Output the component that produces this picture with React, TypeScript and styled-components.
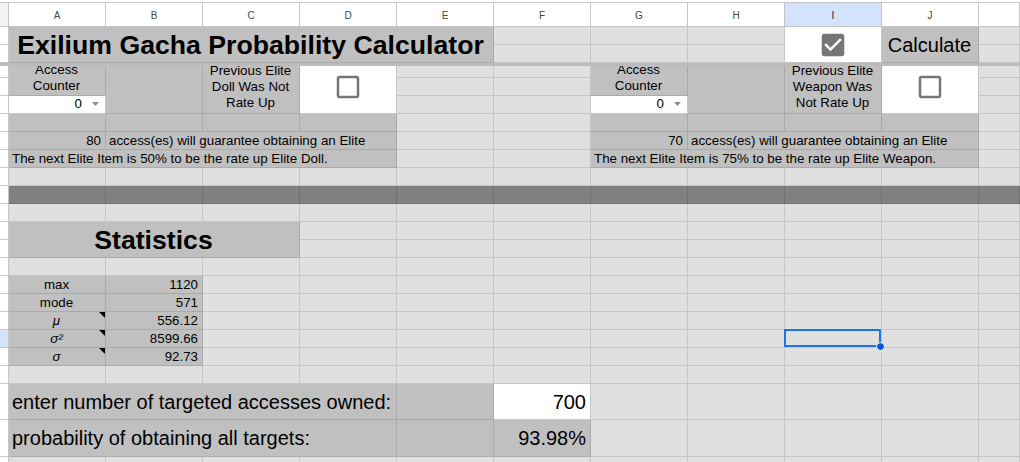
import React from "react";
import styled, { createGlobalStyle } from "styled-components";

const GlobalStyle = createGlobalStyle`
  html, body {
    margin: 0;
    padding: 0;
    background: #ffffff;
  }
  body {
    font-family: "Liberation Sans", Arial, sans-serif;
    overflow: hidden;
  }
`;

type Fill = "light" | "gray" | "white" | "dark";
type HAlign = "left" | "center" | "right";
type VAlign = "top" | "center" | "bottom";

const fills: Record<Fill, { bg: string; line: string }> = {
  light: { bg: "#e0e0e0", line: "#c6c6c6" },
  gray: { bg: "#c0c0c0", line: "#aaaaaa" },
  white: { bg: "#ffffff", line: "#c6c6c6" },
  dark: { bg: "#808080", line: "#707070" },
};

const justify: Record<HAlign, string> = { left: "flex-start", center: "center", right: "flex-end" };
const alignItems: Record<VAlign, string> = { top: "flex-start", center: "center", bottom: "flex-end" };

// row header stub + A..J at 97px + K taking what is left
const COLUMNS = "9px repeat(10, 97px) 1fr";
const GRID_LINE = "#c4c7c5";

const Sheet = styled.div`
  width: 1020px;
  height: 462px;
  box-sizing: border-box;
  padding-top: 2px;
  overflow: hidden;
  display: flex;
  flex-direction: column;
  background: #ffffff;
`;

const ColumnHeader = styled.div`
  flex: none;
  display: grid;
  grid-template-columns: ${COLUMNS};
  grid-template-rows: 24px;
  border-top: 1px solid ${GRID_LINE};
`;

const HeaderCell = styled.div<{ $active?: boolean; $corner?: boolean }>`
  box-sizing: border-box;
  display: flex;
  align-items: center;
  justify-content: center;
  border-right: 1px solid ${GRID_LINE};
  border-bottom: 1px solid ${GRID_LINE};
  background: ${(p) => (p.$corner ? "#f1f3f4" : p.$active ? "#d3e3fd" : "#ffffff")};
  color: ${(p) => (p.$active ? "#0b1a33" : "#444746")};
  font-size: 10px;
  padding-top: 1px;
`;

const Frozen = styled.div`
  flex: none;
  display: grid;
  grid-template-columns: ${COLUMNS};
  grid-template-rows: 18px 18px;
`;

const FreezeBar = styled.div`
  flex: none;
  height: 3px;
  background: #bcbcbc;
`;

const Viewport = styled.div`
  flex: 1;
  overflow: hidden;
`;

const Body = styled.div`
  display: grid;
  grid-template-columns: ${COLUMNS};
  grid-template-rows: repeat(18, 18px) 36px 37px 18px;
  /* sheet is scrolled a few pixels past row 3 */
  margin-top: -6px;
`;

const RowHead = styled.div<{ $active?: boolean }>`
  box-sizing: border-box;
  border-right: 1px solid ${GRID_LINE};
  border-bottom: 1px solid ${GRID_LINE};
  background: ${(p) => (p.$active ? "#d3e3fd" : "#ffffff")};
`;

interface CellProps {
  $fill: Fill;
  $cs?: number;
  $rs?: number;
  $align?: HAlign;
  $valign?: VAlign;
  $size?: number;
  $bold?: boolean;
  $italic?: boolean;
  $wrap?: boolean;
}

const Cell = styled.div<CellProps>`
  box-sizing: border-box;
  position: relative;
  grid-column: span ${(p) => p.$cs ?? 1};
  grid-row: span ${(p) => p.$rs ?? 1};
  display: flex;
  justify-content: ${(p) => justify[p.$align ?? "left"]};
  align-items: ${(p) => alignItems[p.$valign ?? "bottom"]};
  text-align: ${(p) => p.$align ?? "left"};
  padding: 0 4px 0 3px;
  overflow: hidden;
  background: ${(p) => fills[p.$fill].bg};
  border-right: 1px solid ${(p) => fills[p.$fill].line};
  border-bottom: 1px solid ${(p) => fills[p.$fill].line};
  color: #000000;
  font-size: ${(p) => p.$size ?? 13.33}px;
  line-height: ${(p) => Math.round((p.$size ?? 13.33) * 1.17 + 0.4)}px;
  font-weight: ${(p) => (p.$bold ? 700 : 400)};
  font-style: ${(p) => (p.$italic ? "italic" : "normal")};
  white-space: ${(p) => (p.$wrap ? "normal" : "nowrap")};
`;

const Dropdown = styled(Cell)`
  justify-content: flex-end;
  align-items: center;
  gap: 10px;
  padding: 0 6px 2px 3px;
`;

const SelectedCell = styled(Cell)`
  overflow: visible;
  z-index: 2;
`;

const Selection = styled.div`
  position: absolute;
  top: -1px;
  left: -1px;
  right: 0;
  bottom: 0;
  border: 2px solid #1a73e8;
  pointer-events: none;
`;

const Handle = styled.div`
  position: absolute;
  right: -4px;
  bottom: -4px;
  width: 7px;
  height: 7px;
  border-radius: 50%;
  background: #0b57d0;
  border: 1px solid #ffffff;
`;

const NoteMark = styled.div`
  position: absolute;
  top: 0;
  right: 0;
  width: 0;
  height: 0;
  border-top: 6px solid #000000;
  border-left: 6px solid transparent;
`;

const BoxIcon = styled.svg`
  display: block;
  width: 30px;
  height: 30px;
  fill: #767676;
`;

const CaretIcon = styled.svg`
  display: block;
  width: 7px;
  height: 4px;
  margin-bottom: -1px;
  fill: #8e8e8e;
`;

const BOX_BLANK =
  "M19 5v14H5V5h14m0-2H5c-1.1 0-2 .9-2 2v14c0 1.1.9 2 2 2h14c1.1 0 2-.9 2-2V5c0-1.1-.9-2-2-2z";
const BOX_CHECKED =
  "M19 3H5c-1.11 0-2 .9-2 2v14c0 1.1.89 2 2 2h14c1.11 0 2-.9 2-2V5c0-1.1-.89-2-2-2zm-9 14l-5-5 1.41-1.41L10 14.17l7.59-7.59L19 8l-9 9z";

function CheckBox({ checked }: { checked?: boolean }) {
  return (
    <BoxIcon viewBox="0 0 24 24">
      <path d={checked ? BOX_CHECKED : BOX_BLANK} />
    </BoxIcon>
  );
}

function CounterSelect({ value }: { value: number }) {
  return (
    <Dropdown $fill="white">
      <span>{value}</span>
      <CaretIcon viewBox="0 0 7 4">
        <path d="M0 0h7L3.5 4z" />
      </CaretIcon>
    </Dropdown>
  );
}

const blank = (n: number, fill: Fill = "light") =>
  Array.from({ length: n }, () => <Cell $fill={fill} />);

const COLUMN_LETTERS = ["A", "B", "C", "D", "E", "F", "G", "H", "I", "J", ""];

const stats = [
  { label: "max", value: "1120", note: false },
  { label: "mode", value: "571", note: false },
  { label: "μ", value: "556.12", note: true },
  { label: "σ²", value: "8599.66", note: true },
  { label: "σ", value: "92.73", note: true },
];

function Label({ children, rs }: { children: string; rs: number }) {
  return (
    <Cell $fill="gray" $rs={rs} $align="center" $valign="center" $wrap>
      {children}
    </Cell>
  );
}

export default function App() {
  const header = React.Children.toArray([
    <HeaderCell $corner />,
    COLUMN_LETTERS.map((l) => <HeaderCell $active={l === "I"}>{l}</HeaderCell>),
  ]);

  const frozen = React.Children.toArray([
    // row 1
    <RowHead />,
    <Cell $fill="gray" $cs={5} $rs={2} $align="center" $valign="center" $size={26.67} $bold>
      Exilium Gacha Probability Calculator
    </Cell>,
    blank(3),
    <Cell $fill="white" $rs={2} $align="center" $valign="center">
      <CheckBox checked />
    </Cell>,
    <Cell $fill="gray" $rs={2} $align="center" $valign="center" $size={20}>
      Calculate
    </Cell>,
    blank(1),
    // row 2
    <RowHead />,
    blank(3),
    blank(1),
  ]);

  const body = React.Children.toArray([
    // rows 3-5: inputs
    <RowHead />,
    <Label rs={2}>Access Counter</Label>,
    <Cell $fill="gray" $rs={3} />,
    <Label rs={3}>Previous Elite Doll Was Not Rate Up</Label>,
    <Cell $fill="white" $rs={3} $align="center" $valign="center">
      <CheckBox />
    </Cell>,
    blank(2),
    <Label rs={2}>Access Counter</Label>,
    <Cell $fill="gray" $rs={3} />,
    <Label rs={3}>Previous Elite Weapon Was Not Rate Up</Label>,
    <Cell $fill="white" $rs={3} $align="center" $valign="center">
      <CheckBox />
    </Cell>,
    blank(1),

    <RowHead />,
    blank(2),
    blank(1),

    <RowHead />,
    <CounterSelect value={0} />,
    blank(2),
    <CounterSelect value={0} />,
    blank(1),

    // rows 6-8: guarantee info
    <RowHead />,
    blank(4, "gray"),
    blank(2),
    blank(4, "gray"),
    blank(1),

    <RowHead />,
    <Cell $fill="gray" $align="right">80</Cell>,
    <Cell $fill="gray" $cs={3}>access(es) will guarantee obtaining an Elite</Cell>,
    blank(2),
    <Cell $fill="gray" $align="right">70</Cell>,
    <Cell $fill="gray" $cs={3}>access(es) will guarantee obtaining an Elite</Cell>,
    blank(1),

    <RowHead />,
    <Cell $fill="gray" $cs={4}>The next Elite Item is 50% to be the rate up Elite Doll.</Cell>,
    blank(2),
    <Cell $fill="gray" $cs={4}>The next Elite Item is 75% to be the rate up Elite Weapon.</Cell>,
    blank(1),

    // rows 9-11: separator band
    <RowHead />,
    blank(11),
    <RowHead />,
    blank(11, "dark"),
    <RowHead />,
    blank(11),

    // rows 12-13: statistics title
    <RowHead />,
    <Cell $fill="gray" $cs={3} $rs={2} $align="center" $valign="center" $size={26.67} $bold>
      Statistics
    </Cell>,
    blank(8),
    <RowHead />,
    blank(8),

    // row 14
    <RowHead />,
    blank(11),

    // rows 15-19: stats
    stats.map((s) => [
      <RowHead $active={s.label === "σ²"} />,
      <Cell $fill="gray" $align="center" $italic={s.note}>
        {s.label}
        {s.note && <NoteMark />}
      </Cell>,
      <Cell $fill="gray" $align="right">{s.value}</Cell>,
      s.label === "σ²"
        ? [
            blank(6),
            <SelectedCell $fill="light">
              <Selection />
              <Handle />
            </SelectedCell>,
            blank(2),
          ]
        : blank(9),
    ]),

    // row 20
    <RowHead />,
    blank(11),

    // rows 21-22: target probability
    <RowHead />,
    <Cell $fill="gray" $cs={4} $valign="center" $size={20}>
      enter number of targeted accesses owned:
    </Cell>,
    <Cell $fill="gray" />,
    <Cell $fill="white" $align="right" $valign="center" $size={20}>700</Cell>,
    blank(5),

    <RowHead />,
    <Cell $fill="gray" $cs={4} $valign="center" $size={20}>
      probability of obtaining all targets:
    </Cell>,
    <Cell $fill="gray" />,
    <Cell $fill="gray" $align="right" $valign="center" $size={20}>93.98%</Cell>,
    blank(5),

    // row 23
    <RowHead />,
    blank(11),
  ]);

  return (
    <>
      <GlobalStyle />
      <Sheet>
        <ColumnHeader>{header}</ColumnHeader>
        <Frozen>{frozen}</Frozen>
        <FreezeBar />
        <Viewport>
          <Body>{body}</Body>
        </Viewport>
      </Sheet>
    </>
  );
}
